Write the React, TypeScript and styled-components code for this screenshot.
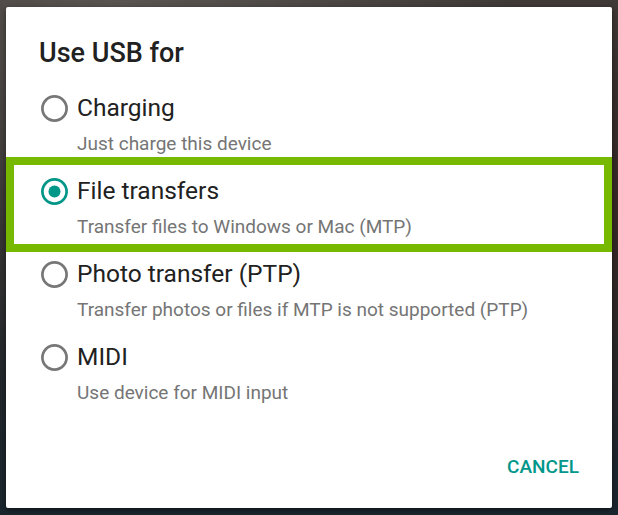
import React, { useState } from "react";
import styled, { createGlobalStyle } from "styled-components";

const GlobalStyle = createGlobalStyle`
  html, body {
    margin: 0;
    padding: 0;
  }
  body {
    font-family: Roboto, "Noto Sans", "Liberation Sans", sans-serif;
    -webkit-font-smoothing: antialiased;
  }
`;

const Screen = styled.div`
  width: 618px;
  height: 515px;
  box-sizing: border-box;
  padding: 7px 6px 7px 6px;
  background:
    radial-gradient(ellipse at 20% 0%, rgba(110, 104, 98, 0.55), transparent 55%),
    radial-gradient(ellipse at 100% 40%, rgba(60, 40, 36, 0.7), transparent 60%),
    linear-gradient(180deg, #403c3a 0%, #2a2829 45%, #1a262e 100%);
  overflow: hidden;
`;

const Dialog = styled.div`
  width: 606px;
  height: 501px;
  background: #ffffff;
  border-radius: 2px;
  box-shadow: 0 2px 6px rgba(0, 0, 0, 0.45);
  display: flex;
  flex-direction: column;
  padding-top: 30px;
  box-sizing: border-box;
`;

const Title = styled.h1`
  margin: 0 0 13px;
  padding-left: 33px;
  font-size: 27px;
  line-height: 32px;
  font-weight: 500;
  color: #212121;
`;

const OptionList = styled.div`
  display: flex;
  flex-direction: column;
`;

const Row = styled.label<{ $highlight?: boolean }>`
  position: relative;
  display: grid;
  grid-template-columns: 27px 1fr;
  column-gap: 9px;
  padding: 10px 0 9px 35px;
  cursor: pointer;

  &::after {
    content: "";
    display: ${(p) => (p.$highlight ? "block" : "none")};
    position: absolute;
    top: -8px;
    bottom: -4px;
    left: 0;
    right: 0;
    border: 8px solid #77b900;
    pointer-events: none;
  }
`;

const RadioBox = styled.span`
  display: flex;
  align-items: center;
  height: 32px;
`;

const Label = styled.span`
  font-size: 24.5px;
  line-height: 32px;
  color: #212121;
`;

const Hint = styled.span`
  grid-column: 2;
  margin-top: 8px;
  font-size: 19px;
  line-height: 24px;
  color: #757575;
`;

const Footer = styled.div`
  margin-top: auto;
  display: flex;
  justify-content: flex-end;
  padding: 0 33px 29px;
`;

const TextButton = styled.button`
  background: none;
  border: none;
  padding: 0;
  font-family: inherit;
  font-size: 19px;
  line-height: 24px;
  font-weight: 500;
  color: #00968a;
  text-transform: uppercase;
  cursor: pointer;
`;

interface RadioProps {
  checked: boolean;
}

function Radio(props: RadioProps) {
  const { checked } = props;
  const color = checked ? "#009688" : "#777777";
  return (
    <svg width="27" height="27" viewBox="0 0 27 27">
      <circle cx="13.5" cy="13.5" r="12.1" fill="none" stroke={color} strokeWidth="2.7" />
      {checked && <circle cx="13.5" cy="13.5" r="6" fill={color} />}
    </svg>
  );
}

const options = [
  { id: "charging", label: "Charging", hint: "Just charge this device" },
  { id: "mtp", label: "File transfers", hint: "Transfer files to Windows or Mac (MTP)" },
  {
    id: "ptp",
    label: "Photo transfer (PTP)",
    hint: "Transfer photos or files if MTP is not supported (PTP)",
  },
  { id: "midi", label: "MIDI", hint: "Use device for MIDI input" },
];

function App() {
  const [selected, setSelected] = useState("mtp");

  return (
    <>
      <GlobalStyle />
      <Screen>
        <Dialog>
          <Title>Use USB for</Title>
          <OptionList>
            {options.map((o) => (
              <Row key={o.id} $highlight={o.id === "mtp"} onClick={() => setSelected(o.id)}>
                <RadioBox>
                  <Radio checked={selected === o.id} />
                </RadioBox>
                <Label>{o.label}</Label>
                <Hint>{o.hint}</Hint>
              </Row>
            ))}
          </OptionList>
          <Footer>
            <TextButton>Cancel</TextButton>
          </Footer>
        </Dialog>
      </Screen>
    </>
  );
}

export default App;
